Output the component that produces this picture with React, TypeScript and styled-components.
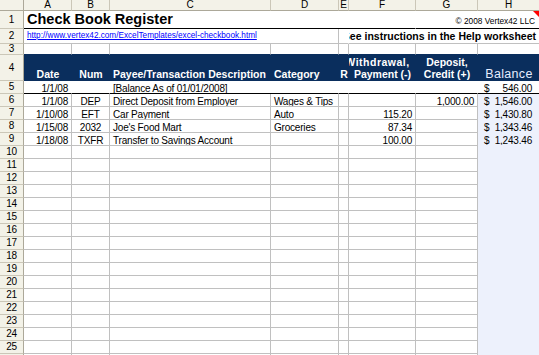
import React from 'react';
import styled, { createGlobalStyle } from 'styled-components';

const COLS = [24, 48, 38, 161, 68, 10, 67, 62, 62];
const TEMPLATE = COLS.map((c) => `${c}px`).join(' ');
const GRID = '#c0c0c0';
const HEAD_BG = '#f3f2e8';
const HEAD_LINE = '#cbc7b8';
const HEAD_EDGE = '#aca899';
const NAVY = '#0a2e5d';
const BLUE = '#edf1fc';

const Global = createGlobalStyle`
  html, body { margin: 0; padding: 0; background: #fff; overflow: hidden; }
  body { font-family: "Liberation Sans", Arial, sans-serif; }
`;

const Sheet = styled.div`
  width: 540px;
  display: flex;
  flex-direction: column;
`;

const GridRow = styled.div<{ $h: number }>`
  display: grid;
  grid-template-columns: ${TEMPLATE};
  height: ${(p) => p.$h}px;
  flex: none;
`;

const Corner = styled.div`
  box-sizing: border-box;
  background: ${HEAD_BG};
  border-right: 1px solid ${HEAD_EDGE};
  border-bottom: 1px solid ${HEAD_EDGE};
`;

const ColLetter = styled.div`
  box-sizing: border-box;
  background: ${HEAD_BG};
  border-right: 1px solid ${HEAD_LINE};
  border-bottom: 1px solid ${HEAD_EDGE};
  display: flex;
  align-items: center;
  justify-content: center;
  font-size: 10px;
  line-height: 10px;
  color: #000;
`;

const RowNum = styled.div`
  box-sizing: border-box;
  background: ${HEAD_BG};
  border-right: 1px solid ${HEAD_EDGE};
  border-bottom: 1px solid ${HEAD_LINE};
  display: flex;
  align-items: center;
  justify-content: center;
  font-size: 10px;
  line-height: 10px;
  letter-spacing: -0.3px;
  color: #000;
`;

type Align = 'left' | 'right' | 'center' | 'split';
const justify = (a?: Align) =>
  a === 'right' ? 'flex-end' : a === 'center' ? 'center' : a === 'split' ? 'space-between' : 'flex-start';

const Cell = styled.div<{
  $align?: Align;
  $span?: number;
  $right?: string;
  $bottom?: string;
  $bg?: string;
  $v?: 'center' | 'bottom';
}>`
  position: relative;
  box-sizing: border-box;
  min-width: 0;
  grid-column: span ${(p) => p.$span ?? 1};
  display: flex;
  align-items: ${(p) => (p.$v === 'center' ? 'center' : 'flex-end')};
  justify-content: ${(p) => justify(p.$align)};
  overflow: hidden;
  white-space: nowrap;
  padding: 0 3px;
  font-size: 10px;
  letter-spacing: -0.2px;
  line-height: 8px;
  color: #000;
  background: ${(p) => p.$bg ?? '#fff'};
  border-right: 1px solid ${(p) => p.$right ?? GRID};
  border-bottom: 1px solid ${(p) => p.$bottom ?? GRID};
`;

const MoneyCell = styled(Cell)`
  padding: 0 7px 0 6px;
`;

const Title = styled.span`
  font-size: 14.5px;
  font-weight: bold;
  letter-spacing: 0;
  line-height: 16px;
  margin-bottom: 1px;
`;

const Copyright = styled.span`
  font-size: 8.3px;
  letter-spacing: 0;
  line-height: 10px;
  margin-bottom: 2px;
  padding-right: 1px;
`;

const CommentMark = styled.span`
  position: absolute;
  top: 0;
  right: 0;
  width: 0;
  height: 0;
  border-top: 6px solid #ff0000;
  border-left: 6px solid transparent;
`;

const Link = styled.a`
  font-size: 8.2px;
  letter-spacing: 0;
  color: #0000ff;
  text-decoration: underline;
  line-height: 10px;
`;

const Notice = styled.span`
  font-size: 10.5px;
  font-weight: bold;
  letter-spacing: 0;
  line-height: 12px;
`;

const HeadCell = styled.div<{ $align?: Align }>`
  box-sizing: border-box;
  min-width: 0;
  background: ${NAVY};
  color: #fff;
  display: flex;
  flex-direction: column;
  justify-content: flex-end;
  align-items: ${(p) => justify(p.$align)};
  overflow: hidden;
  white-space: nowrap;
  padding: 0 3px 1px;
  font-size: 10.5px;
  font-weight: bold;
  line-height: 12px;
`;

const Shifted = styled.span`
  letter-spacing: 0.5px;
  margin-right: 10px;
`;

const BalanceHead = styled.span`
  font-size: 12.5px;
  font-weight: normal;
  letter-spacing: 0.3px;
  color: #e6edff;
  line-height: 14px;
  margin-bottom: -1px;
`;

type Entry = {
  date: string;
  num: string;
  payee: string;
  cat: string;
  wd: string;
  dep: string;
  bal: string;
};

const entries: Entry[] = [
  { date: '1/1/08', num: 'DEP', payee: 'Direct Deposit from Employer', cat: 'Wages & Tips', wd: '', dep: '1,000.00', bal: '1,546.00' },
  { date: '1/10/08', num: 'EFT', payee: 'Car Payment', cat: 'Auto', wd: '115.20', dep: '', bal: '1,430.80' },
  { date: '1/15/08', num: '2032', payee: "Joe's Food Mart", cat: 'Groceries', wd: '87.34', dep: '', bal: '1,343.46' },
  { date: '1/18/08', num: 'TXFR', payee: 'Transfer to Savings Account', cat: '', wd: '100.00', dep: '', bal: '1,243.46' },
];

// rows 10..25 are visible; a 26th row only peeks in at the bottom edge
const emptyRows = Array.from({ length: 17 }, (_, i) => i + 10);

const letters = ['A', 'B', 'C', 'D', 'E', 'F', 'G', 'H'];

export default function App() {
  return (
    <>
      <Global />
      <Sheet>
        <GridRow $h={11}>
          <Corner />
          {letters.map((l) => (
            <ColLetter key={l}>{l}</ColLetter>
          ))}
        </GridRow>

        <GridRow $h={18}>
          <RowNum>1</RowNum>
          <Cell $span={6} $right="#fff" $bottom="#000">
            <Title>Check Book Register</Title>
          </Cell>
          <Cell $span={2} $align="right" $right="#fff" $bottom="#000">
            <Copyright>© 2008 Vertex42 LLC</Copyright>
            <CommentMark />
          </Cell>
        </GridRow>

        <GridRow $h={15}>
          <RowNum>2</RowNum>
          <Cell $span={4} $v="center">
            <Link href="#">http://www.vertex42.com/ExcelTemplates/excel-checkbook.html</Link>
          </Cell>
          <Cell $right="#fff" />
          <Cell $span={3} $align="right" $right="#fff" $v="center">
            <Notice>See instructions in the Help worksheet</Notice>
          </Cell>
        </GridRow>

        <GridRow $h={11}>
          <RowNum>3</RowNum>
          {letters.map((l) => (
            <Cell key={l} $bottom={NAVY} />
          ))}
        </GridRow>

        <GridRow $h={26}>
          <RowNum>4</RowNum>
          <HeadCell $align="center">Date</HeadCell>
          <HeadCell $align="center">Num</HeadCell>
          <HeadCell>Payee/Transaction Description</HeadCell>
          <HeadCell>Category</HeadCell>
          <HeadCell $align="center">R</HeadCell>
          <HeadCell $align="center">
            <Shifted>Withdrawal,</Shifted>
            <span>Payment (-)</span>
          </HeadCell>
          <HeadCell $align="center">
            <span>Deposit,</span>
            <span>Credit (+)</span>
          </HeadCell>
          <HeadCell $align="center">
            <BalanceHead>Balance</BalanceHead>
          </HeadCell>
        </GridRow>

        <GridRow $h={13}>
          <RowNum>5</RowNum>
          <Cell $align="right" $right="#fff" $bottom="#000">1/1/08</Cell>
          <Cell $right="#fff" $bottom="#000" />
          <Cell $span={2} $right="#fff" $bottom="#000">[Balance As of 01/01/2008]</Cell>
          <Cell $right="#fff" $bottom="#000" />
          <Cell $right="#fff" $bottom="#000" />
          <Cell $right="#fff" $bottom="#000" />
          <MoneyCell $align="split" $right="#fff" $bottom="#000">
            <span>$</span>
            <span>546.00</span>
          </MoneyCell>
        </GridRow>

        {entries.map((e, i) => (
          <GridRow $h={13} key={e.date + e.num}>
            <RowNum>{i + 6}</RowNum>
            <Cell $align="right">{e.date}</Cell>
            <Cell $align="center">{e.num}</Cell>
            <Cell>{e.payee}</Cell>
            <Cell>{e.cat}</Cell>
            <Cell />
            <Cell $align="right">{e.wd}</Cell>
            <Cell $align="right">{e.dep}</Cell>
            <MoneyCell $align="split" $bg={BLUE} $right={BLUE} $bottom={BLUE}>
              <span>$</span>
              <span>{e.bal}</span>
            </MoneyCell>
          </GridRow>
        ))}

        {emptyRows.map((n) => (
          <GridRow $h={13} key={n}>
            <RowNum>{n <= 25 ? n : ''}</RowNum>
            <Cell />
            <Cell />
            <Cell />
            <Cell />
            <Cell />
            <Cell />
            <Cell />
            <Cell $bg={BLUE} $right={BLUE} $bottom={BLUE} />
          </GridRow>
        ))}
      </Sheet>
    </>
  );
}
